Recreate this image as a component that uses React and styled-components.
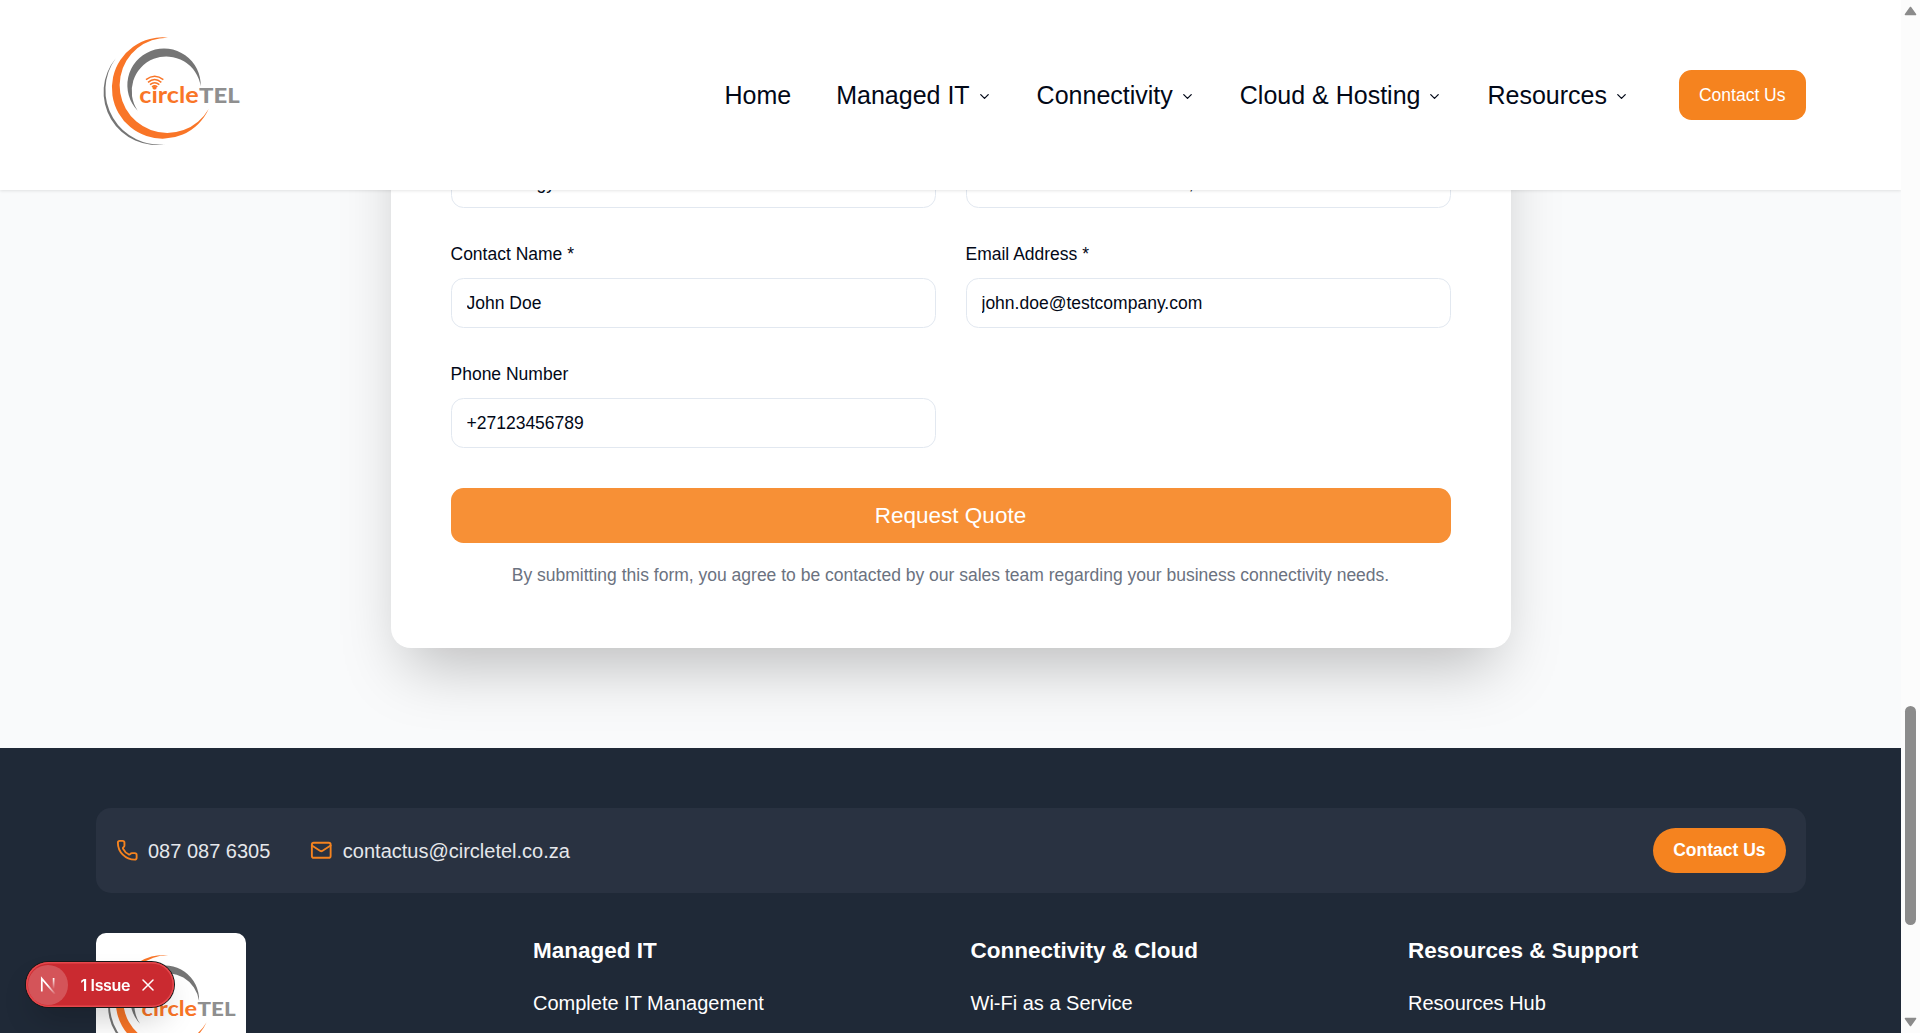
import React from "react";
import styled, { createGlobalStyle } from "styled-components";
import { ChevronDown, Phone, Mail } from "lucide-react";

const GlobalStyle = createGlobalStyle`
  *, *::before, *::after { box-sizing: border-box; }
  body { margin: 0; overflow: hidden; }
  body, input, button { font-family: "Liberation Sans", Arial, Helvetica, sans-serif; }
  h3, p, ul { margin: 0; padding: 0; }
  a { color: inherit; text-decoration: none; }
`;

const Window = styled.div`
  display: grid;
  grid-template-columns: 1fr 19px;
  height: 1033px;
  overflow: hidden;
  background: #fff;
  color: #020817;
`;

const Page = styled.div`
  display: flex;
  flex-direction: column;
  min-width: 0;
  height: 1033px;
  overflow: hidden;
`;

const Header = styled.header`
  flex: none;
  display: flex;
  align-items: center;
  justify-content: space-between;
  height: 190px;
  padding: 0 95.5px;
  background: #fff;
  box-shadow: 0 1px 3px rgba(0, 0, 0, 0.1);
  z-index: 2;
`;

const LogoSvg = styled.svg`
  display: block;
  width: ${(p) => p.$width}px;
  height: ${(p) => (p.$width * 350) / 450}px;
  overflow: visible;
`;

const HeaderLogo = styled.a`
  display: block;
  padding-bottom: 7px;
`;

const NavRow = styled.div`
  display: flex;
  align-items: center;
  gap: 30px;
`;

const Nav = styled.nav`
  display: flex;
  align-items: center;
  gap: 5px;
`;

const NavItem = styled.a`
  display: flex;
  align-items: center;
  gap: 5px;
  padding: 0 20px;
  font-size: 25px;
  line-height: 35px;
  white-space: nowrap;

  svg {
    margin: 2px 0 0 2px;
    width: 15px;
    height: 15px;
  }
`;

const HeaderButton = styled.button`
  height: 50px;
  padding: 0 20px;
  border: 0;
  border-radius: 12.5px;
  background: #f5831f;
  color: #fff;
  font-size: 17.5px;
  white-space: nowrap;
`;

const FormSection = styled.section`
  flex: none;
  display: flex;
  flex-direction: column;
  justify-content: flex-end;
  align-items: center;
  height: 558px;
  padding-bottom: 100px;
  overflow: hidden;
  background: #f9fafb;
`;

const Card = styled.form`
  flex: none;
  width: 1120px;
  padding: 60px;
  border-radius: 20px;
  background: #fff;
  box-shadow: 0 31.25px 62.5px -15px rgba(0, 0, 0, 0.25);
`;

const Fields = styled.div`
  display: grid;
  grid-template-columns: 1fr 1fr;
  gap: 30px;
`;

const Field = styled.div`
  display: flex;
  flex-direction: column;
`;

const Label = styled.label`
  height: 40px;
  padding-top: 1px;
  font-size: 17.5px;
  line-height: 30px;
`;

const Input = styled.input`
  width: 100%;
  height: 50px;
  padding: 0 15px;
  border: 1px solid #e2e8f0;
  border-radius: 12.5px;
  background: #fff;
  color: #020817;
  font-size: 17.5px;
  outline: none;
`;

const SubmitButton = styled.button`
  display: block;
  width: 100%;
  height: 55px;
  margin: 40px 0 20px;
  border: 0;
  border-radius: 12.5px;
  background: #f79036;
  color: #fff;
  font-size: 22.5px;
`;

const Consent = styled.p`
  color: #6b7280;
  font-size: 17.5px;
  line-height: 25px;
  text-align: center;
`;

const Footer = styled.footer`
  flex: 1;
  min-height: 0;
  padding: 60px 95.5px 0;
  overflow: hidden;
  background: #1f2937;
  color: #fff;
`;

const ContactBar = styled.div`
  display: flex;
  align-items: center;
  gap: 40px;
  height: 85px;
  padding: 0 20px;
  border-radius: 15px;
  background: #293241;
`;

const ContactLink = styled.a`
  display: flex;
  align-items: center;
  gap: 10px;
  color: #e5e7eb;
  font-size: 20px;
  line-height: 30px;

  svg {
    width: 22.5px;
    height: 22.5px;
    color: #f5831f;
  }
`;

const PillButton = styled.button`
  height: 45px;
  margin-left: auto;
  padding: 0 20px;
  border: 0;
  border-radius: 23px;
  background: #f5831f;
  color: #fff;
  font-size: 17.5px;
  font-weight: 700;
`;

const FooterColumns = styled.div`
  display: grid;
  grid-template-columns: repeat(4, 1fr);
  gap: 40px;
  margin-top: 40px;
`;

const FooterLogo = styled.div`
  width: 150px;
  height: 150px;
  padding: 17.5px 5px;
  border-radius: 10px;
  background: #fff;
`;

const ColumnTitle = styled.h3`
  font-size: 22.5px;
  font-weight: 700;
  line-height: 35px;
  margin-bottom: 20px;
`;

const ColumnLinks = styled.ul`
  list-style: none;
  font-size: 20px;
  line-height: 30px;
`;

const Scrollbar = styled.div`
  display: flex;
  flex-direction: column;
  align-items: center;
  height: 1033px;
  padding: 6px 0;
  background: #fcfcfc;
`;

const ScrollArrow = styled.svg`
  flex: none;
  width: 13px;
  height: 10px;
  fill: #8b8b8b;
  stroke: #8b8b8b;
  stroke-width: 1.6;
  stroke-linejoin: round;
`;

const ScrollTrack = styled.div`
  flex: 1;
  padding-top: 690px;
`;

const ScrollThumb = styled.div`
  width: 11px;
  height: 219px;
  border-radius: 6px;
  background: #8b8b8b;
`;

const IssueBadge = styled.div`
  position: fixed;
  left: 25.5px;
  bottom: 26px;
  display: flex;
  align-items: center;
  width: 148px;
  height: 45px;
  padding: 0 2.5px;
  border-radius: 23px;
  background: #ca2a30;
  color: #fff;
  box-shadow: 0 0 0 1px #171717, inset 0 0 0 1.5px #e5484d,
    0 16px 32px -8px rgba(0, 0, 0, 0.24);
  z-index: 5;
`;

const BadgeMark = styled.span`
  display: grid;
  place-items: center;
  flex: none;
  width: 40px;
  height: 40px;
  border-radius: 50%;
  background: rgba(255, 255, 255, 0.2);
`;

const BadgeText = styled.span`
  margin-left: 12.5px;
  font-family: Inter, "Liberation Sans", sans-serif;
  font-size: 16px;
  font-weight: 600;
  letter-spacing: -0.35px;
  white-space: nowrap;
`;

const BadgeClose = styled.svg`
  margin-left: 12px;
  width: 12px;
  height: 12px;
  stroke: #fff;
  stroke-width: 1.5;
  stroke-linecap: round;
`;

function Logo({ width }) {
  return (
    <LogoSvg $width={width} viewBox="48 40 450 350" role="img" aria-label="circleTEL">
      <g fill="#757575">
        <path d="M108 115A159 159 0 0 0 262 373A163 163 0 0 1 108 115Z" />
        <path d="M362 200A110 110 0 1 0 173 273A104 104 0 1 1 362 200Z" />
      </g>
      <path
        d="M265 54A152 152 0 1 0 386 268A143 143 0 1 1 265 54Z"
        fill="#f97527"
      />
      <g fill="none" stroke="#f97527" strokeWidth="4.5">
        <path d="M198 180Q224 159 250 180" />
        <path d="M204 188Q224 171 244 188" />
        <path d="M210 195Q224 183 238 195" />
        <path d="M216 202Q224 195 232 202" />
      </g>
      <g fontFamily="Lato, sans-serif" fontWeight="700">
        <text x="178" y="249" fontSize="68" fill="#f97527" textLength="178" lengthAdjust="spacingAndGlyphs">
          circle
        </text>
        <text x="357" y="249" fontSize="61" fontWeight="900" fill="#8f8f8f" textLength="122" lengthAdjust="spacingAndGlyphs">
          TEL
        </text>
      </g>
    </LogoSvg>
  );
}

const navItems = [
  { label: "Home" },
  { label: "Managed IT", menu: true },
  { label: "Connectivity", menu: true },
  { label: "Cloud & Hosting", menu: true },
  { label: "Resources", menu: true },
];

const fields = [
  { label: "Industry", value: "Technology" },
  { label: "Business Address *", value: "123 Business Street Unit 5, Sandton" },
  { label: "Contact Name *", value: "John Doe" },
  { label: "Email Address *", value: "john.doe@testcompany.com" },
  { label: "Phone Number", value: "+27123456789" },
];

const footerColumns = [
  { title: "Managed IT", links: ["Complete IT Management"] },
  { title: "Connectivity & Cloud", links: ["Wi-Fi as a Service"] },
  { title: "Resources & Support", links: ["Resources Hub"] },
];

export default function App() {
  return (
    <Window>
      <GlobalStyle />
      <Page>
        <Header>
          <HeaderLogo href="#">
            <Logo width={150} />
          </HeaderLogo>
          <NavRow>
            <Nav>
              {navItems.map((item) => (
                <NavItem key={item.label} href="#">
                  {item.label}
                  {item.menu && <ChevronDown />}
                </NavItem>
              ))}
            </Nav>
            <HeaderButton>Contact Us</HeaderButton>
          </NavRow>
        </Header>

        <FormSection>
          <Card>
            <Fields>
              {fields.map((field) => (
                <Field key={field.label}>
                  <Label>{field.label}</Label>
                  <Input defaultValue={field.value} />
                </Field>
              ))}
            </Fields>
            <SubmitButton type="button">Request Quote</SubmitButton>
            <Consent>
              By submitting this form, you agree to be contacted by our sales team
              regarding your business connectivity needs.
            </Consent>
          </Card>
        </FormSection>

        <Footer>
          <ContactBar>
            <ContactLink href="#">
              <Phone />
              087 087 6305
            </ContactLink>
            <ContactLink href="#">
              <Mail />
              contactus@circletel.co.za
            </ContactLink>
            <PillButton>Contact Us</PillButton>
          </ContactBar>
          <FooterColumns>
            <FooterLogo>
              <Logo width={140.6} />
            </FooterLogo>
            {footerColumns.map((column) => (
              <div key={column.title}>
                <ColumnTitle>{column.title}</ColumnTitle>
                <ColumnLinks>
                  {column.links.map((link) => (
                    <li key={link}>
                      <a href="#">{link}</a>
                    </li>
                  ))}
                </ColumnLinks>
              </div>
            ))}
          </FooterColumns>
        </Footer>
      </Page>

      <Scrollbar>
        <ScrollArrow viewBox="0 0 13 10">
          <path d="M6.5 1.5L11.5 8.5H1.5Z" />
        </ScrollArrow>
        <ScrollTrack>
          <ScrollThumb />
        </ScrollTrack>
        <ScrollArrow viewBox="0 0 13 10">
          <path d="M6.5 8.5L11.5 1.5H1.5Z" />
        </ScrollArrow>
      </Scrollbar>

      <IssueBadge>
        <BadgeMark>
          <svg width="18" height="18" viewBox="0 0 18 18" fill="none" strokeWidth="1.7">
            <defs>
              <linearGradient id="diag" x1="9" y1="9" x2="17" y2="18" gradientUnits="userSpaceOnUse">
                <stop stopColor="#fff" />
                <stop offset="1" stopColor="#fff" stopOpacity="0" />
              </linearGradient>
              <linearGradient id="stem" x1="14" y1="2" x2="14" y2="13" gradientUnits="userSpaceOnUse">
                <stop stopColor="#fff" />
                <stop offset="1" stopColor="#fff" stopOpacity="0" />
              </linearGradient>
            </defs>
            <path d="M2.8 15.5V2.6L16 18" stroke="url(#diag)" />
            <path d="M14.6 2V13" stroke="url(#stem)" />
          </svg>
        </BadgeMark>
        <BadgeText>1 Issue</BadgeText>
        <BadgeClose viewBox="0 0 12 12">
          <path d="M1 1L11 11M11 1L1 11" />
        </BadgeClose>
      </IssueBadge>
    </Window>
  );
}
